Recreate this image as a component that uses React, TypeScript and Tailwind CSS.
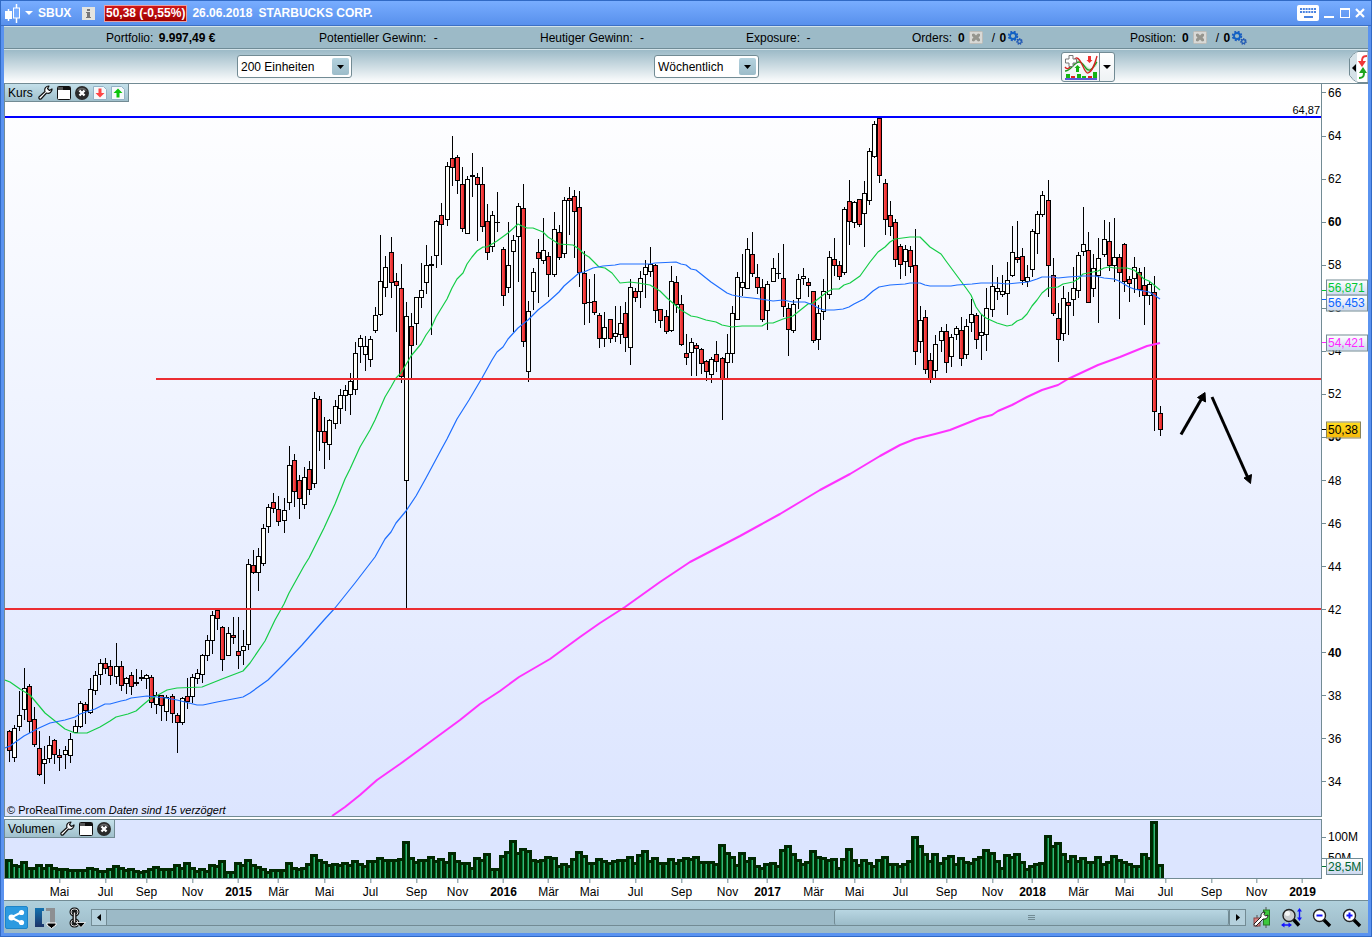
import type { ReactNode } from 'react'

// [x, high, bodyTop, bodyBottom, low, kind, volume], kind: 1 = up, 0 = down, 2 = unchanged
type Candle = [number, number, number, number, number, number, number]

const candles: Candle[] = [
  [9, 730, 731, 751, 762, 0, 19], [14, 725, 728, 758, 762, 1, 14], [19, 691, 715, 727, 731, 1, 13],
  [24, 668, 688, 710, 720, 1, 17], [29, 684, 686, 722, 733, 0, 11], [34, 707, 719, 745, 747, 0, 11],
  [39, 731, 748, 775, 776, 0, 14], [44, 746, 759, 764, 784, 1, 11], [49, 736, 745, 759, 763, 1, 14],
  [54, 739, 740, 755, 764, 0, 11], [59, 749, 755, 758, 771, 0, 10], [65, 746, 750, 755, 769, 1, 10],
  [70, 733, 739, 756, 763, 1, 9], [75, 720, 726, 733, 733, 1, 9], [80, 701, 703, 727, 728, 1, 9],
  [85, 702, 704, 711, 724, 0, 9], [90, 678, 689, 713, 714, 1, 11], [95, 671, 675, 691, 695, 1, 10],
  [100, 659, 663, 675, 685, 1, 8], [105, 658, 663, 669, 674, 0, 8], [110, 660, 666, 676, 685, 0, 10],
  [116, 643, 666, 677, 684, 1, 13], [121, 661, 666, 686, 691, 0, 11], [126, 677, 678, 684, 694, 1, 9],
  [131, 672, 675, 687, 695, 0, 10], [136, 669, 682, 684, 686, 2, 8], [141, 670, 677, 679, 681, 2, 7],
  [146, 674, 675, 679, 689, 1, 8], [151, 675, 677, 703, 708, 0, 10], [156, 692, 695, 705, 714, 1, 12],
  [161, 695, 695, 706, 721, 0, 10], [166, 695, 697, 712, 721, 1, 10], [172, 694, 696, 714, 723, 0, 10],
  [177, 713, 715, 723, 753, 0, 14], [182, 697, 698, 723, 725, 1, 11], [187, 678, 696, 702, 709, 0, 16],
  [192, 674, 677, 697, 703, 1, 11], [197, 669, 673, 679, 684, 1, 8], [202, 654, 655, 675, 683, 1, 10],
  [207, 635, 640, 656, 661, 1, 8], [212, 611, 615, 641, 654, 1, 14], [217, 609, 610, 619, 630, 0, 13],
  [222, 626, 627, 660, 671, 0, 18], [228, 627, 633, 656, 656, 1, 7], [233, 617, 635, 638, 644, 0, 7],
  [238, 617, 651, 656, 669, 0, 16], [243, 630, 646, 651, 665, 1, 14], [248, 559, 564, 645, 650, 1, 19],
  [253, 550, 565, 573, 574, 0, 14], [258, 548, 556, 573, 591, 1, 12], [263, 524, 528, 564, 566, 1, 10],
  [268, 504, 507, 527, 533, 1, 7], [273, 493, 502, 509, 513, 0, 9], [278, 496, 509, 522, 526, 0, 9],
  [284, 498, 510, 521, 533, 1, 9], [289, 446, 465, 503, 510, 1, 16], [294, 454, 460, 492, 507, 0, 11],
  [299, 475, 480, 499, 519, 0, 10], [304, 467, 477, 505, 509, 1, 11], [309, 461, 469, 490, 495, 0, 15],
  [314, 392, 398, 484, 488, 1, 24], [319, 396, 399, 432, 451, 0, 19], [324, 417, 431, 443, 469, 0, 17],
  [329, 419, 420, 445, 460, 1, 14], [335, 400, 406, 424, 429, 1, 15], [340, 389, 395, 409, 424, 1, 14],
  [345, 385, 390, 396, 411, 1, 16], [350, 373, 381, 395, 415, 1, 14], [355, 342, 353, 390, 395, 1, 18],
  [360, 335, 338, 347, 363, 1, 15], [365, 336, 346, 355, 371, 1, 13], [370, 336, 339, 360, 367, 1, 18],
  [375, 307, 315, 331, 333, 1, 18], [380, 235, 281, 315, 316, 1, 21], [385, 256, 267, 288, 297, 1, 19],
  [391, 237, 252, 283, 298, 0, 19], [396, 273, 281, 286, 332, 0, 19], [401, 264, 288, 377, 383, 0, 20],
  [406, 302, 316, 481, 608, 1, 37], [411, 313, 326, 346, 379, 0, 21], [416, 297, 297, 324, 345, 1, 17],
  [421, 263, 290, 298, 308, 1, 19], [426, 245, 265, 283, 294, 1, 19], [431, 256, 264, 266, 335, 2, 22],
  [436, 220, 221, 256, 268, 1, 18], [441, 203, 215, 225, 265, 0, 20], [447, 162, 166, 220, 226, 1, 17],
  [452, 136, 158, 168, 186, 0, 26], [457, 155, 157, 181, 194, 0, 18], [462, 167, 184, 229, 232, 0, 16],
  [467, 176, 179, 234, 234, 1, 16], [472, 153, 175, 177, 197, 2, 11], [477, 173, 177, 185, 241, 0, 21],
  [482, 167, 184, 227, 232, 0, 19], [487, 204, 221, 253, 260, 0, 25], [492, 211, 215, 247, 252, 1, 10],
  [497, 192, 222, 223, 232, 2, 10], [503, 247, 249, 296, 306, 0, 23], [508, 222, 265, 288, 293, 1, 27],
  [513, 235, 240, 252, 332, 1, 38], [518, 203, 206, 237, 282, 1, 26], [523, 184, 208, 342, 347, 0, 30],
  [528, 301, 311, 372, 382, 1, 28], [533, 268, 272, 292, 310, 1, 19], [538, 239, 252, 259, 303, 0, 18],
  [543, 218, 250, 261, 264, 1, 19], [548, 252, 256, 275, 297, 0, 22], [554, 212, 229, 275, 277, 1, 21],
  [559, 225, 232, 258, 260, 0, 13], [564, 197, 200, 254, 258, 1, 15], [569, 187, 198, 201, 235, 0, 13],
  [574, 190, 196, 212, 258, 0, 20], [579, 191, 207, 273, 287, 0, 27], [584, 251, 273, 304, 325, 0, 23],
  [589, 279, 302, 303, 323, 2, 16], [594, 274, 301, 313, 315, 0, 16], [599, 313, 315, 339, 348, 0, 20],
  [604, 312, 327, 339, 347, 1, 18], [610, 319, 319, 339, 343, 0, 16], [615, 306, 333, 337, 342, 1, 18],
  [620, 306, 323, 335, 344, 1, 19], [625, 302, 313, 338, 352, 0, 19], [630, 279, 287, 348, 365, 1, 22],
  [635, 288, 291, 298, 302, 0, 16], [640, 271, 278, 292, 308, 1, 24], [645, 260, 267, 275, 298, 1, 28],
  [650, 247, 264, 272, 277, 1, 18], [655, 264, 265, 311, 323, 0, 21], [660, 309, 309, 321, 328, 0, 16],
  [666, 310, 316, 332, 334, 0, 16], [671, 266, 281, 331, 332, 1, 20], [676, 276, 282, 305, 313, 0, 16],
  [681, 295, 304, 345, 346, 0, 19], [686, 334, 353, 358, 365, 0, 21], [691, 338, 342, 353, 376, 1, 20],
  [696, 343, 345, 349, 376, 0, 22], [701, 348, 349, 364, 374, 0, 17], [706, 360, 361, 372, 381, 0, 17],
  [711, 357, 359, 375, 383, 1, 17], [716, 341, 354, 362, 372, 0, 15], [722, 357, 358, 379, 420, 0, 34],
  [727, 334, 353, 363, 378, 1, 26], [732, 306, 313, 354, 363, 1, 22], [737, 272, 277, 320, 320, 1, 14],
  [742, 254, 282, 288, 296, 1, 26], [747, 238, 249, 289, 289, 1, 18], [752, 232, 254, 274, 277, 0, 21],
  [757, 264, 277, 288, 294, 0, 13], [762, 279, 287, 320, 322, 0, 11], [767, 281, 284, 311, 330, 1, 15],
  [773, 258, 268, 282, 282, 1, 16], [778, 253, 273, 274, 279, 2, 13], [783, 244, 278, 307, 317, 0, 29],
  [788, 303, 308, 330, 356, 0, 33], [793, 300, 304, 331, 333, 1, 25], [798, 274, 279, 299, 309, 1, 19],
  [803, 268, 276, 279, 285, 1, 15], [808, 278, 282, 286, 297, 0, 17], [813, 291, 291, 341, 343, 0, 28],
  [818, 305, 313, 340, 350, 1, 22], [823, 279, 291, 312, 320, 1, 21], [829, 251, 257, 295, 299, 1, 19],
  [834, 238, 259, 266, 276, 0, 20], [839, 261, 265, 277, 280, 0, 11], [844, 207, 209, 273, 275, 1, 20],
  [849, 180, 201, 222, 245, 0, 30], [854, 201, 202, 223, 228, 1, 19], [859, 199, 199, 225, 227, 0, 14],
  [864, 181, 193, 214, 247, 1, 19], [869, 148, 151, 201, 205, 1, 16], [874, 121, 124, 157, 158, 1, 13],
  [879, 118, 118, 176, 183, 0, 19], [885, 179, 183, 220, 235, 0, 22], [890, 201, 215, 227, 236, 0, 15],
  [895, 219, 222, 260, 267, 0, 15], [900, 244, 246, 265, 279, 0, 13], [905, 245, 249, 262, 276, 1, 15],
  [910, 246, 250, 267, 273, 0, 18], [915, 229, 265, 352, 365, 0, 42], [920, 306, 320, 342, 353, 1, 33],
  [925, 310, 317, 370, 374, 0, 25], [930, 353, 360, 379, 383, 0, 18], [935, 335, 344, 371, 379, 1, 25],
  [941, 327, 331, 341, 352, 1, 16], [946, 324, 331, 363, 373, 0, 21], [951, 334, 337, 357, 367, 1, 23],
  [956, 326, 328, 335, 340, 1, 15], [961, 317, 330, 359, 366, 0, 21], [966, 319, 326, 355, 359, 1, 17],
  [971, 299, 314, 323, 332, 1, 16], [976, 313, 315, 340, 349, 0, 20], [981, 314, 332, 336, 360, 1, 22],
  [986, 288, 308, 335, 351, 1, 29], [992, 265, 286, 310, 317, 1, 26], [997, 277, 288, 292, 300, 1, 18],
  [1002, 275, 291, 295, 297, 1, 11], [1007, 262, 280, 294, 315, 1, 24], [1012, 226, 252, 276, 277, 1, 22],
  [1017, 221, 257, 260, 263, 0, 25], [1022, 248, 256, 281, 285, 0, 17], [1027, 265, 277, 282, 287, 1, 10],
  [1032, 229, 231, 270, 277, 1, 13], [1037, 211, 214, 234, 254, 1, 15], [1042, 191, 195, 215, 217, 1, 16],
  [1048, 180, 200, 266, 297, 0, 43], [1053, 258, 275, 314, 316, 0, 33], [1058, 303, 318, 340, 362, 0, 36],
  [1063, 286, 298, 334, 341, 1, 25], [1068, 292, 302, 306, 335, 0, 18], [1073, 267, 288, 300, 316, 1, 23],
  [1078, 252, 255, 291, 298, 1, 18], [1083, 207, 244, 252, 256, 1, 21], [1088, 232, 250, 303, 303, 0, 17],
  [1093, 254, 268, 289, 297, 1, 17], [1098, 238, 258, 276, 323, 1, 22], [1104, 220, 239, 255, 257, 1, 15],
  [1109, 222, 241, 266, 271, 0, 17], [1114, 218, 257, 266, 282, 1, 23], [1119, 254, 257, 273, 319, 0, 19],
  [1124, 243, 244, 282, 292, 0, 17], [1129, 276, 279, 284, 302, 0, 15], [1134, 257, 267, 279, 293, 1, 13],
  [1139, 268, 272, 290, 297, 0, 13], [1144, 267, 285, 296, 325, 0, 25], [1149, 282, 284, 296, 305, 1, 21],
  [1154, 276, 292, 412, 431, 0, 57], [1160, 406, 413, 430, 436, 0, 14],
]

const ma20 =
  '5,680 10,682 20,689 30,695 35,701 45,713 55,721 65,729 75,733 87,733 100,727 110,721 116,717 128,714 136,711 144,704 150,699 158,695 167,690 177,688 202,687 212,683 222,679 243,671 250,663 265,641 275,620 284,604 289,593 304,566 309,558 324,528 335,504 345,479 350,469 360,447 370,430 375,420 385,397 391,387 396,378 401,373 411,356 421,344 426,335 431,328 436,317 447,299 452,288 457,279 463,273 467,264 472,257 477,251 483,247 487,247 497,241 508,233 518,224 522,226 527,228 533,228 543,232 548,237 559,244 573,245 579,249 584,254 589,257 599,267 605,268 612,273 620,283 630,282 638,283 650,285 655,288 660,291 667,298 681,310 691,316 697,317 706,320 716,322 722,325 732,327 742,326 762,326 767,323 773,323 783,319 793,316 803,308 808,304 813,303 818,299 827,292 833,289 839,289 844,285 850,283 860,276 870,262 878,252 885,247 890,242 895,239 910,237 920,237 925,242 930,247 941,254 946,261 966,288 971,295 976,307 981,314 986,318 997,323 1007,326 1012,325 1017,321 1022,319 1027,314 1032,306 1037,300 1042,293 1048,288 1058,287 1063,284 1073,282 1078,279 1083,274 1093,272 1098,271 1104,268 1109,267 1114,268 1127,268 1134,270 1139,274 1144,279 1149,281 1154,285 1160,290'

const ma50 =
  '5,748 10,746 24,736 39,728 50,723 65,720 75,717 80,714 95,709 105,704 110,704 121,701 126,700 131,698 147,696 166,698 177,700 197,705 203,705 217,702 238,698 243,697 250,693 268,680 284,664 302,645 324,620 335,608 355,583 375,557 385,539 391,532 396,523 406,511 416,496 426,478 441,450 447,439 457,419 469,400 482,378 492,360 497,352 503,347 508,339 518,328 528,320 538,310 548,302 559,292 564,286 579,273 584,272 593,268 603,266 615,265 620,264 650,264 655,263 676,262 681,264 686,265 691,269 696,270 711,282 727,293 732,295 742,297 752,298 760,299 767,300 773,301 783,300 793,302 805,302 813,305 818,308 824,310 834,310 843,309 849,307 854,304 864,299 873,291 879,287 890,285 905,284 910,283 920,283 925,285 930,286 951,286 957,285 972,284 981,283 997,283 1007,284 1017,283 1028,282 1037,279 1042,277 1053,277 1058,278 1068,277 1083,276 1095,276 1104,278 1114,279 1119,281 1129,287 1134,289 1144,291 1149,292 1154,295 1160,299'

const ma200 =
  '332,816 345,807 360,795 377,780 400,764 430,742 460,720 480,704 500,691 519,677 550,659 580,637 600,623 625,607 660,582 690,562 715,549 740,536 760,525 780,514 800,502 820,490 850,474 880,456 900,445 915,439 935,434 950,430 965,424 980,418 992,415 998,411 1012,405 1027,397 1042,390 1058,385 1068,379 1083,372 1098,365 1120,357 1147,346 1160,343'

const prices = [66, 64, 62, 60, 58, 56, 54, 52, 50, 48, 46, 44, 42, 40, 38, 36, 34]

const months: [string, number][] = [
  ['Mai', 59], ['Jul', 105], ['Sep', 146], ['Nov', 192], ['2015', 238], ['Mär', 278], ['Mai', 324],
  ['Jul', 370], ['Sep', 416], ['Nov', 457], ['2016', 503], ['Mär', 548], ['Mai', 589], ['Jul', 635],
  ['Sep', 681], ['Nov', 727], ['2017', 767], ['Mär', 813], ['Mai', 854], ['Jul', 900], ['Sep', 946],
  ['Nov', 992], ['2018', 1032], ['Mär', 1078], ['Mai', 1124], ['Jul', 1165], ['Sep', 1211], ['Nov', 1256],
  ['2019', 1302],
]

// plot area: 1316 x 732 units, starting at (5, 84)
const priceTop = (y: number) => `${((y - 84) / 732) * 100}%`
const timeLeft = (x: number) => `${((x - 5) / 1316) * 100}%`

const tags = [
  { text: '56,871', y: 287.5, tick: 290, style: 'w-[42px] border-[#728b94] bg-linear-to-b from-white to-[#cdd9f0] text-[#00c832]', line: 'bg-[#00c832]' },
  { text: '56,453', y: 302.5, tick: 299, style: 'w-[42px] border-[#728b94] bg-linear-to-b from-white to-[#cdd9f0] text-[#0a64ff]', line: 'bg-[#0a64ff]' },
  { text: '54,421', y: 342.5, tick: 342, style: 'w-[42px] border-[#728b94] bg-linear-to-b from-white to-[#cdd9f0] text-[#ff28ff]', line: 'bg-[#ff28ff]' },
  { text: '50,38', y: 429.5, tick: 429, style: 'w-[35px] border-[#8b8456] bg-linear-to-b from-[#ffdc1e] to-[#f5b90a] text-black', line: 'bg-black' },
]

function IconButton({ label, children, className = '' }: { label: string; children: ReactNode; className?: string }) {
  return (
    <button type="button" aria-label={label} title={label} className={`flex shrink-0 items-center justify-center ${className}`}>
      {children}
    </button>
  )
}

function WrenchIcon() {
  return (
    <svg width="15" height="15" viewBox="0 0 15 15">
      <path d="M1 12 L7 6.500 C6 3.500 8 1 11 1 L9.500 3.500 L11.500 5.500 L14 4 C14.200 7 11.500 9 8.500 8 L3 14 C1.500 14.500 .5 13.500 1 12 Z" fill="#fff" stroke="#111" strokeWidth="1.200" strokeLinejoin="round" />
    </svg>
  )
}

function WindowIcon() {
  return (
    <svg width="14" height="14" viewBox="0 0 14 14">
      <rect x=".5" y=".5" width="13" height="13" rx="1" fill="#fff" stroke="#111" />
      <rect x="1" y="1" width="12" height="3" fill="#111" />
      <rect x="1" y="1" width="5" height="3" fill="#555" />
    </svg>
  )
}

function CloseIcon() {
  return (
    <svg width="14" height="14" viewBox="0 0 14 14">
      <circle cx="7" cy="7" r="7" fill="#2a2a2a" />
      <path d="M2 5 A5.500 5.500 0 0 1 12 5 Q7 2 2 5 Z" fill="#666" />
      <path d="M4.500 4.500 L9.500 9.500 M9.500 4.500 L4.500 9.500" stroke="#fff" strokeWidth="2.400" />
    </svg>
  )
}

function ArrowPageIcon({ up }: { up?: boolean }) {
  return (
    <svg width="14" height="14" viewBox="0 0 14 14">
      <path d="M.5 .5 H10.500 L13.500 3.500 V13.500 H.5 Z" fill="#f6f9fb" stroke="#93b2c6" />
      {up ? (
        <path d="M7 2.500 L11.500 7 H8.500 V11.500 H5.500 V7 H2.500 Z" fill="#0cc40c" />
      ) : (
        <path d="M7 11.500 L11.500 7 H8.500 V2.500 H5.500 V7 H2.500 Z" fill="#ff4545" />
      )}
    </svg>
  )
}

function CancelIcon() {
  return (
    <svg width="14" height="13" viewBox="0 0 14 13">
      <rect x=".5" y=".5" width="13" height="12" rx="1" fill="#d9d9d6" stroke="#bcbcb8" />
      <path d="M3 3 L5 2.500 L7 4.500 L9 2.500 L11 3 L11 5 L9.500 6.500 L11 8 L11 10 L9 10.500 L7 8.500 L5 10.500 L3 10 L3 8 L4.500 6.500 L3 5 Z" fill="#96968f" />
    </svg>
  )
}

function GearsIcon() {
  return (
    <svg width="16" height="14" viewBox="0 0 16 14">
      <circle cx="6" cy="5" r="4.300" fill="none" stroke="#1c5cc0" strokeWidth="1.800" strokeDasharray="2 1.400" />
      <circle cx="6" cy="5" r="3" fill="none" stroke="#1262c4" strokeWidth="1.800" />
      <circle cx="12.500" cy="10.500" r="2.600" fill="none" stroke="#1c50b0" strokeWidth="1.400" strokeDasharray="1.300 1" />
      <circle cx="12.500" cy="10.500" r="1.800" fill="none" stroke="#1a55b4" strokeWidth="1.200" />
    </svg>
  )
}

function Select({ label, options, width }: { label: string; options: string[]; width: string }) {
  return (
    <div className={`relative h-[23px] ${width}`}>
      <select
        aria-label={label}
        className="block h-full w-full appearance-none rounded-[3px] border border-[#728b94] bg-white pl-[3px] text-xs text-black"
      >
        {options.map((option) => (
          <option key={option}>{option}</option>
        ))}
      </select>
      <span className="pointer-events-none absolute top-[3px] right-[3px] flex h-[17px] w-[17px] items-center justify-center rounded-[2px] bg-linear-to-b from-[#b4d2de] to-[#9cbcc9]">
        <svg width="7" height="4" viewBox="0 0 7 4">
          <path d="M0 0 H7 L3.500 4 Z" fill="#000" />
        </svg>
      </span>
    </div>
  )
}

function TitleBar() {
  return (
    <header className="flex h-[25px] shrink-0 items-center border-b border-[#3d70c4] bg-linear-to-b from-[#78adff] to-[#5890ec] text-xs font-bold text-white">
      <IconButton label="Chart" className="ml-[3px] gap-1">
        <svg width="17" height="19" viewBox="0 0 17 19">
          <path d="M4.500 5 V17 M12.500 0 V4 M12.500 14 V19" stroke="#fff" strokeWidth="1.500" />
          <rect x="1" y="7" width="7" height="8" fill="#fff" />
          <rect x="9.500" y="4" width="6" height="10" fill="#78adff" stroke="#fff" />
        </svg>
        <svg width="8" height="4" viewBox="0 0 8 4">
          <path d="M0 0 H8 L4 4 Z" fill="#fff" />
        </svg>
      </IconButton>
      <span className="ml-[5px] w-[44px]">SBUX</span>
      <IconButton label="Info">
        <svg width="13" height="13" viewBox="0 0 13 13">
          <rect width="13" height="13" fill="#e4e4e0" />
          <path d="M5 2 H8 V4 H5 Z M4 5 H8 V10 H9 V11 H4 V10 H5 V6 H4 Z" fill="#777" />
        </svg>
      </IconButton>
      <span className="ml-[9px] flex h-[17px] items-center border border-[#eaa0a0] bg-linear-to-b from-[#d01818] to-[#a00000] px-px">50,38 (-0,55%)</span>
      <span className="ml-[5px]">26.06.2018</span>
      <h1 className="ml-[6px]">STARBUCKS CORP.</h1>
      <div className="mr-[6px] ml-auto flex items-center gap-[5px]">
        <IconButton label="Tastatur">
          <svg width="22" height="16" viewBox="0 0 22 16">
            <rect width="22" height="16" rx="2" fill="#fff" />
            <path d="M3 4 H19 M3 7 H19" stroke="#4a83e0" strokeWidth="2" strokeDasharray="2 .8" />
            <path d="M7 12 H16" stroke="#4a83e0" strokeWidth="2" />
          </svg>
        </IconButton>
        <IconButton label="Minimieren">
          <svg width="10" height="10" viewBox="0 0 10 10"><path d="M0 9 H10" stroke="#fff" strokeWidth="2" /></svg>
        </IconButton>
        <IconButton label="Maximieren" className="ml-px">
          <svg width="10" height="10" viewBox="0 0 10 10">
            <rect x=".5" y=".5" width="9" height="9" fill="none" stroke="#fff" />
            <path d="M0 1 H10" stroke="#fff" strokeWidth="2" />
          </svg>
        </IconButton>
        <IconButton label="Fenster schließen">
          <svg width="10" height="10" viewBox="0 0 10 10"><path d="M1 1 L9 9 M9 1 L1 9" stroke="#fff" strokeWidth="2.200" /></svg>
        </IconButton>
      </div>
    </header>
  )
}

function Positions({ label }: { label: string }) {
  return (
    <div className="flex items-center">
      <span className="mr-[6px]">{label}</span>
      <b>0</b>
      <IconButton label={`${label} löschen`} className="ml-1"><CancelIcon /></IconButton>
      <span className="ml-[9px]">/&nbsp;<b className="ml-px">0</b></span>
      <IconButton label={`${label} Einstellungen`} className="ml-px"><GearsIcon /></IconButton>
    </div>
  )
}

function AccountBar() {
  return (
    <section className="grid h-[23px] shrink-0 grid-cols-[213fr_221fr_206fr_166fr_218fr_238fr] items-center border-t border-b border-t-[#d4e4ea] border-b-[#6f8b96] bg-[#9cbac7] pl-[102px] text-xs whitespace-nowrap">
      <div>Portfolio: <b className="ml-[2px]">9.997,49 €</b></div>
      <div>Potentieller Gewinn: <span className="ml-1">-</span></div>
      <div>Heutiger Gewinn: <span className="ml-1">-</span></div>
      <div>Exposure: <span className="ml-[3px]">-</span></div>
      <Positions label="Orders:" />
      <Positions label="Position:" />
    </section>
  )
}

function Toolbar() {
  return (
    <section className="grid h-[35px] shrink-0 grid-cols-[417fr_407fr_288fr_19px] items-center border-t border-b border-t-[#d4e4ea] border-b-[#728b94] bg-linear-to-b from-[#9cbac7] to-white pl-[233px]">
      <Select label="Einheiten" width="w-[115px]" options={['200 Einheiten', '500 Einheiten']} />
      <Select label="Zeitrahmen" width="w-[105px]" options={['Wöchentlich', 'Täglich', 'Monatlich']} />
      <div className="flex h-[30px] w-[54px] rounded-[3px] border border-[#728b94] bg-linear-to-b from-white to-[#eef2f4]">
        <IconButton label="Indikator hinzufügen" className="w-[38px] border-r border-[#728b94]">
          <svg width="34" height="26" viewBox="0 0 34 26">
            <path d="M1 17 C8 17 10 2 15 6 C20 12 19 18 24 19 C29 17 31 9 33 3 L33 11 C28 18 24 14 19 9 C13 3 9 13 1 17 Z" fill="#bfe8c8" />
            <path d="M1 17 C7 17 10 8 15 8 C20 8 22 18 26 16 C29 15 31 10 33 8" fill="none" stroke="#1c9c1c" strokeWidth="1.300" />
            <path d="M1 13 C6 20 9 3 13 4 C18 5 20 20 24 19 C29 17 31 9 33 2" fill="none" stroke="#d82020" strokeWidth="1.300" />
            <path d="M5 1.500 H9 V5 H12.500 V9 H9 V12.500 H5 V9 H1.500 V5 H5 Z" fill="#fff" stroke="#777" />
            <path d="M13.500 11 L16.500 14 H15 V18 H12 V14 H10.500 Z" fill="#12b412" />
            <path d="M25.500 9 L28.500 6 H27 V2 H24 V6 H22.500 Z" fill="#f03030" />
            <path d="M2 20 H6 V24 H2 Z M13 20 H17 V24 H13 Z M18 22 H22 V24 H18 Z M29 18 H33 V24 H29 Z" fill="#12b412" />
            <path d="M7 22 H11 V24 H7 Z M24 22 H28 V24 H24 Z" fill="#e02020" />
            <path d="M1 25 H33" stroke="#1a1ac8" strokeWidth="1.400" />
          </svg>
        </IconButton>
        <IconButton label="Indikatoren" className="flex-1">
          <svg width="8" height="4" viewBox="0 0 8 4"><path d="M0 0 H8 L4 4 Z" fill="#000" /></svg>
        </IconButton>
      </div>
      <IconButton label="Handelsleiste">
        <svg width="19" height="32" viewBox="0 0 19 32">
          <path d="M19 .5 H9 Q4 2 .5 8 V24 Q4 30 9 31.500 H19 Z" fill="#fff" stroke="#728b94" />
          <path d="M8 1 Q4 3 1 8 V24 Q4 29 8 31 Z" fill="#d5e2e8" />
          <path d="M7 13 V21 L3 17 Z" fill="#000" />
          <path d="M18 5 C13 5 13 8 13 11" fill="none" stroke="#ef3838" strokeWidth="2" />
          <path d="M9 10 H17 L13 16 Z" fill="#ef3838" />
          <path d="M10 27 C15 27 15 24 15 21" fill="none" stroke="#1ea41e" strokeWidth="2" />
          <path d="M10 22 H18 L14 16 Z" fill="#1ea41e" />
        </svg>
      </IconButton>
    </section>
  )
}

function PriceChart() {
  return (
    <svg className="block h-full w-full" viewBox="5 84 1316 732" preserveAspectRatio="none" role="img" aria-label="Kurs">
      <defs>
        <linearGradient id="down">
          <stop offset="0" stopColor="#ff5555" />
          <stop offset="1" stopColor="#e02020" />
        </linearGradient>
      </defs>
      <g shapeRendering="crispEdges">
        {candles.map(([x, high, top, bottom, low, kind]) => (
          <g key={x}>
            <rect x={x} y={high} width="1" height={low - high} />
            <rect x={x - 2} y={top} width="5" height={bottom - top} />
            {kind !== 2 && (
              <rect x={x - 1} y={top + 1} width="3" height={bottom - top - 2} fill={kind === 1 ? '#fffffa' : 'url(#down)'} />
            )}
          </g>
        ))}
      </g>
      <g fill="none" strokeLinejoin="round">
        <polyline points={ma20} stroke="#14cd46" strokeWidth="1.200" />
        <polyline points={ma50} stroke="#1e6eff" strokeWidth="1.200" />
        <polyline points={ma200} stroke="#ff32ff" strokeWidth="2" />
      </g>
      <g shapeRendering="crispEdges">
        <rect x="5" y="116" width="1316" height="2" fill="#0000ff" />
        <rect x="156" y="378" width="1165" height="2" fill="#eb2d32" />
        <rect x="5" y="608" width="1316" height="2" fill="#eb2d32" />
      </g>
      <g stroke="#000" strokeWidth="3">
        <path d="M1181 434.500 L1202 398" />
        <path d="M1212 397 L1248 478" />
        <path d="M1205 392.500 L1205.500 402 L1197.500 397.500 Z M1250.500 483.500 L1251.500 474.500 L1244 478 Z" strokeWidth="1" />
      </g>
    </svg>
  )
}

function VolumeChart() {
  return (
    <svg className="block h-full w-full" viewBox="5 0 1316 58" preserveAspectRatio="none" role="img" aria-label="Volumen" shapeRendering="crispEdges">
      {candles.map(([x, , , , , , volume]) => (
        <rect key={x} x={x - 4} y={58 - volume} width="8" height={volume} fill="#002800" />
      ))}
      {candles.map(([x, , , , , , volume]) => (
        <g key={x}>
          <rect x={x - 1} y={61 - volume} width="1" height={volume - 3} fill="#007832" />
          <rect x={x} y={61 - volume} width="1" height={volume - 3} fill="#3cb478" />
        </g>
      ))}
    </svg>
  )
}

function PanelHeader({ title, children }: { title: string; children?: ReactNode }) {
  return (
    <div className="absolute top-0 left-0 flex h-[18px] items-center gap-1 border-r border-b border-[#728b94] bg-linear-to-b from-[#c4e0ea] to-[#a0c0cc] pr-[3px] pl-[3px] text-xs">
      <h2 className="mr-px">{title}</h2>
      <IconButton label={`${title} konfigurieren`}><WrenchIcon /></IconButton>
      <IconButton label={`${title} Fenster`}><WindowIcon /></IconButton>
      <IconButton label={`${title} schließen`}><CloseIcon /></IconButton>
      {children}
    </div>
  )
}

function PriceAxis() {
  return (
    <div className="relative mb-px w-[46px] shrink-0 text-xs leading-[14px]">
      {prices.map((price) => {
        const top = priceTop(93 + (66 - price) * 21.53)
        return (
          <div key={price} className="absolute left-0 flex h-[14px] -translate-y-1/2 items-center gap-[2px]" style={{ top }}>
            <span className="h-px w-1 bg-[#728b94]" />
            <span className={price % 10 === 0 ? 'font-bold' : ''}>{price}</span>
          </div>
        )
      })}
      {tags.map((tag) => (
        <div key={tag.text}>
          <span className={`absolute left-0 h-px w-1 ${tag.line}`} style={{ top: priceTop(tag.tick) }} />
          <span className={`absolute left-1 flex h-[17px] -translate-y-1/2 items-center border pl-px ${tag.style}`} style={{ top: priceTop(tag.y) }}>
            {tag.text}
          </span>
        </div>
      ))}
    </div>
  )
}

function VolumeAxis() {
  return (
    <div className="relative w-[46px] shrink-0 text-xs leading-[14px]">
      <span className="absolute top-[18px] left-0 h-px w-1 bg-[#728b94]" />
      <span className="absolute top-[11px] left-[6px]">100M</span>
      <span className="absolute top-[39px] left-0 h-px w-1 bg-[#728b94]" />
      <span className="absolute top-[32px] left-[6px]">50M</span>
      <span className="absolute top-[47px] left-0 h-px w-1 bg-[#007832]" />
      <span className="absolute top-[39px] left-1 flex h-[17px] w-[37px] items-center border border-[#728b94] bg-linear-to-b from-white to-[#cdd9f0] pl-px text-[#006432]">28,5M</span>
    </div>
  )
}

function Magnifier({ children }: { children: ReactNode }) {
  return (
    <svg width="20" height="20" viewBox="0 0 20 20">
      <path d="M11.500 11.500 L18 18" stroke="#000" strokeWidth="3.400" />
      <circle cx="7.500" cy="7.500" r="6" fill="#fff" stroke="#222" strokeWidth="1.400" />
      {children}
    </svg>
  )
}

function BottomBar() {
  return (
    <footer className="flex h-[33px] shrink-0 items-center border-t border-[#728b94] bg-linear-to-b from-[#b0d0dc] to-[#9cbac7] pt-px pr-[6px] pl-px">
      <IconButton label="Teilen" className="h-[23px] w-[23px] rounded-[2px] border border-[#1d84c8] bg-[#2c9ae0]">
        <svg width="17" height="17" viewBox="0 0 17 17" fill="#fff">
          <path d="M14 3 L3 8.500 L14 14" fill="none" stroke="#fff" strokeWidth="2" />
          <circle cx="3.500" cy="8.500" r="3" />
          <circle cx="13.500" cy="3.500" r="2.600" />
          <circle cx="13.500" cy="13.500" r="2.600" />
        </svg>
      </IconButton>
      <IconButton label="Layout" className="ml-[7px]">
        <svg width="22" height="22" viewBox="0 0 22 22">
          <defs>
            <linearGradient id="bracket" x2="0" y2="1">
              <stop offset="0" stopColor="#1272b0" />
              <stop offset="1" stopColor="#1c3468" />
            </linearGradient>
          </defs>
          <path d="M0 1 H9 V4 H7 V17 H9 V20 H0 Z" fill="url(#bracket)" />
          <path d="M11 1 H20 V20 H13 V17 H15 V4 H11 Z" fill="#8d8f92" />
          <path d="M12 16 H21 V18 L16.500 21.500 L12 18 Z" fill="#000" stroke="#fff" />
        </svg>
      </IconButton>
      <IconButton label="Verknüpfen" className="ml-[11px]">
        <svg width="18" height="22" viewBox="0 0 18 22">
          <g fill="none">
            <rect x="3" y="2" width="7" height="6" rx="3" stroke="#111" strokeWidth="3" />
            <rect x="3" y="13" width="7" height="6" rx="3" stroke="#111" strokeWidth="3" />
            <rect x="3" y="2" width="7" height="6" rx="3" stroke="#ddd" />
            <rect x="3" y="13" width="7" height="6" rx="3" stroke="#ddd" />
            <path d="M6.500 5 V16" stroke="#111" strokeWidth="4" strokeLinecap="round" />
            <path d="M6.500 5.500 V15.500" stroke="#ddd" strokeWidth="1.400" />
          </g>
          <path d="M8 15.500 H17.500 L13 20.500 Z" fill="#000" stroke="#fff" strokeWidth=".8" />
        </svg>
      </IconButton>
      <div className="ml-[5px] flex h-[17px] flex-1 border border-[#728b94] bg-[#9cbac7]">
        <IconButton label="Zurück" className="w-[15px] border-r border-[#728b94] bg-[#b4d0dc]">
          <svg width="4" height="7" viewBox="0 0 4 7"><path d="M4 0 V7 L0 3.500 Z" fill="#000" /></svg>
        </IconButton>
        <div className="flex-[728]" />
        <IconButton label="Zeitraum verschieben" className="flex-[394] rounded-[2px] border-r border-l border-[#728b94] bg-linear-to-b from-[#b8d6e2] to-[#9cbcc9]">
          <svg width="7" height="6" viewBox="0 0 7 6"><path d="M0 .5 H7 M0 2.500 H7 M0 4.500 H7" stroke="#728b94" /></svg>
        </IconButton>
        <IconButton label="Vor" className="w-[16px] border-l border-[#728b94] bg-[#b4d0dc]">
          <svg width="4" height="7" viewBox="0 0 4 7"><path d="M0 0 V7 L4 3.500 Z" fill="#000" /></svg>
        </IconButton>
      </div>
      <IconButton label="Chart-Einstellungen" className="ml-[7px]">
        <svg width="18" height="21" viewBox="0 0 18 21">
          <path d="M4 8 V20 M13 0 V21" stroke="#555" />
          <rect x="1" y="11" width="6" height="8" fill="#d88080" stroke="#844" />
          <rect x="10.500" y="3" width="6" height="15" fill="#3cc83c" stroke="#287828" />
          <path d="M1 17 L8 10 C7.500 7 9 5 12 5 L11 7.500 L12.500 9 L15 8 C15 11 13 12.500 10 12 L3 19 C1.500 19 1 18 1 17 Z" fill="#fff" stroke="#222" />
        </svg>
      </IconButton>
      <IconButton label="Zoom anpassen" className="ml-[10px]">
        <svg width="22" height="20" viewBox="0 0 22 20">
          <path d="M12 11 L18 17.500" stroke="#000" strokeWidth="3.400" />
          <circle cx="8" cy="7.500" r="6" fill="#c9cdcf" stroke="#222" strokeWidth="1.400" />
          <circle cx="6.500" cy="5.500" r="2.500" fill="#f4f6f6" />
          <path d="M18.500 2 V11 M1 17 H9" stroke="#1414ff" strokeWidth="1.400" />
          <path d="M16 3.500 L18.500 0 L21 3.500 Z M16 9.500 L18.500 13 L21 9.500 Z M3.500 14.500 L0 17 L3.500 19.500 Z M7.500 14.500 L11 17 L7.500 19.500 Z" fill="#1414ff" />
        </svg>
      </IconButton>
      <IconButton label="Verkleinern" className="ml-[9px]">
        <Magnifier><path d="M4.500 7.500 H10.500" stroke="#1414ff" strokeWidth="2" /></Magnifier>
      </IconButton>
      <IconButton label="Vergrößern" className="ml-[10px]">
        <Magnifier><path d="M4.500 7.500 H10.500 M7.500 4.500 V10.500" stroke="#1414ff" strokeWidth="2" /></Magnifier>
      </IconButton>
    </footer>
  )
}

export default function App() {
  return (
    <div className="flex h-screen min-h-[400px] flex-col border border-[#316ac5] bg-[#5a93f0] font-['Liberation_Sans',Arial,sans-serif] text-black">
      <TitleBar />
      <div className="mx-[3px] mb-[3px] flex min-h-0 flex-1 flex-col bg-white">
        <AccountBar />
        <Toolbar />
        <main className="flex min-h-0 flex-1 flex-col">
          <div className="flex min-h-0 flex-1">
            <div className="relative min-w-0 flex-1 border-r border-b border-l border-[#728b94] bg-linear-to-b from-white to-[#dce5ff]">
              <PriceChart />
              <PanelHeader title="Kurs">
                <IconButton label="Verkaufen"><ArrowPageIcon /></IconButton>
                <IconButton label="Kaufen"><ArrowPageIcon up /></IconButton>
              </PanelHeader>
              <span className="absolute right-px -translate-y-full text-[11px] leading-3" style={{ top: priceTop(116) }}>64,87</span>
              <p className="absolute bottom-0 left-[2px] text-[11px] leading-3">
                © ProRealTime.com <i>Daten sind 15 verzögert</i>
              </p>
            </div>
            <PriceAxis />
          </div>
          <div className="mt-[2px] flex h-[60px] shrink-0">
            <div className="relative min-w-0 flex-1 border border-[#728b94] bg-[#dce5ff]">
              <VolumeChart />
              <PanelHeader title="Volumen" />
            </div>
            <VolumeAxis />
          </div>
          <div className="flex h-[21px] shrink-0 pr-[47px] pl-px">
            <div className="relative flex-1 text-xs">
              {months.map(([label, x]) => (
                <div key={x} className="absolute top-0 flex -translate-x-1/2 flex-col items-center leading-[14px]" style={{ left: timeLeft(x + 0.5) }}>
                  <span className="mb-[2px] h-1 w-px bg-[#728b94]" />
                  <span className={label.startsWith('20') ? 'font-bold' : ''}>{label}</span>
                </div>
              ))}
            </div>
          </div>
        </main>
        <BottomBar />
      </div>
    </div>
  )
}
